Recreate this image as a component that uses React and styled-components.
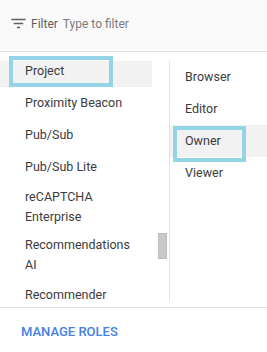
import React, { useLayoutEffect, useRef } from "react";
import styled, { createGlobalStyle } from "styled-components";

const GlobalStyle = createGlobalStyle`
  html, body {
    margin: 0;
    padding: 0;
    background: #ffffff;
  }
  body {
    font-family: Roboto, "Liberation Sans", Arial, sans-serif;
    -webkit-font-smoothing: antialiased;
  }
`;

const Panel = styled.div`
  width: 267px;
  height: 352px;
  display: flex;
  flex-direction: column;
  background: #ffffff;
  overflow: hidden;
`;

const Header = styled.div`
  height: 52px;
  box-sizing: border-box;
  display: flex;
  align-items: center;
  padding: 0 0 4px 9px;
  background: #fafafa;
  border-bottom: 1px solid #e0e0e0;
`;

const FilterIcon = styled.svg`
  width: 19px;
  height: 19px;
  flex: none;
  fill: #5f6368;
`;

const FilterLabel = styled.span`
  margin-left: 3px;
  font-size: 12px;
  color: #5f5f5f;
`;

const FilterInput = styled.input`
  margin-left: 5px;
  flex: 1;
  min-width: 0;
  border: none;
  outline: none;
  background: transparent;
  padding: 0;
  font-family: inherit;
  font-size: 12px;
  color: #333;
  &::placeholder {
    color: #7b7b7b;
  }
`;

const Body = styled.div`
  position: relative;
  display: flex;
  padding: 9px 0 6px;
  border-bottom: 1px solid #e0e0e0;
`;

const LeftColumn = styled.div`
  width: 169px;
  height: 240px;
  display: flex;
`;

const List = styled.ul`
  list-style: none;
  margin: 0;
  padding: 0;
  width: ${(p) => p.$width}px;
  height: 240px;
  overflow: hidden;
`;

const Item = styled.li`
  min-height: 32px;
  box-sizing: border-box;
  display: flex;
  align-items: center;
  padding: 4px 16px 4px ${(p) => p.$indent}px;
  font-size: 12.5px;
  line-height: 20px;
  color: #3c3c3c;
  background: ${(p) => (p.$active ? "#f2f2f2" : "transparent")};
`;

const Track = styled.div`
  width: 17px;
  display: flex;
  flex-direction: column;
  padding-top: ${(p) => p.$offset}px;
  box-sizing: border-box;
`;

const Thumb = styled.div`
  margin-left: 6px;
  width: 9px;
  height: 26px;
  box-sizing: border-box;
  background: #c9c9c9;
  border: 1px solid #bdbdbd;
`;

const RightColumn = styled.div`
  flex: 1;
  height: 240px;
  border-left: 1px solid #e3e3e3;
`;

/* annotation frame drawn over the list rows */
const Callout = styled.div`
  position: absolute;
  left: ${(p) => p.$x}px;
  top: ${(p) => p.$y}px;
  width: ${(p) => p.$w}px;
  height: ${(p) => p.$h}px;
  box-sizing: border-box;
  border: 4px solid #93d5e6;
  pointer-events: none;
`;

const Footer = styled.div`
  flex: 1;
  display: flex;
  align-items: center;
  padding: 2px 0 0 21px;
`;

const ManageButton = styled.button`
  border: none;
  background: none;
  padding: 0;
  font-family: inherit;
  font-size: 13px;
  font-weight: 500;
  color: #4680e4;
  cursor: pointer;
`;

const services = [
  "Project",
  "Proximity Beacon",
  "Pub/Sub",
  "Pub/Sub Lite",
  "reCAPTCHA Enterprise",
  "Recommendations AI",
  "Recommender",
];

const roles = ["Browser", "Editor", "Owner", "Viewer"];

export default function App() {
  const listRef = useRef(null);

  useLayoutEffect(() => {
    // list is scrolled so the Project row sits 6px under the top edge
    if (listRef.current) listRef.current.scrollTop = 6;
  }, []);

  return (
    <>
      <GlobalStyle />
      <Panel>
        <Header>
          <FilterIcon viewBox="0 0 24 24">
            <path d="M10 18h4v-2h-4v2zM3 6v2h18V6H3zm3 7h12v-2H6v2z" />
          </FilterIcon>
          <FilterLabel>Filter</FilterLabel>
          <FilterInput placeholder="Type to filter" />
        </Header>
        <Body>
          <LeftColumn>
            <List ref={listRef} $width={152}>
              {services.map((s) => (
                <Item key={s} $indent={25} $active={s === "Project"}>
                  {s}
                </Item>
              ))}
            </List>
            <Track $offset={172}>
              <Thumb />
            </Track>
          </LeftColumn>
          <RightColumn>
            <List $width={97}>
              {roles.map((r) => (
                <Item key={r} $indent={15} $active={r === "Owner"}>
                  {r}
                </Item>
              ))}
            </List>
          </RightColumn>
          <Callout $x={9} $y={4} $w={104} $h={31} />
          <Callout $x={173} $y={74} $w={73} $h={36} />
        </Body>
        <Footer>
          <ManageButton>MANAGE ROLES</ManageButton>
        </Footer>
      </Panel>
    </>
  );
}
